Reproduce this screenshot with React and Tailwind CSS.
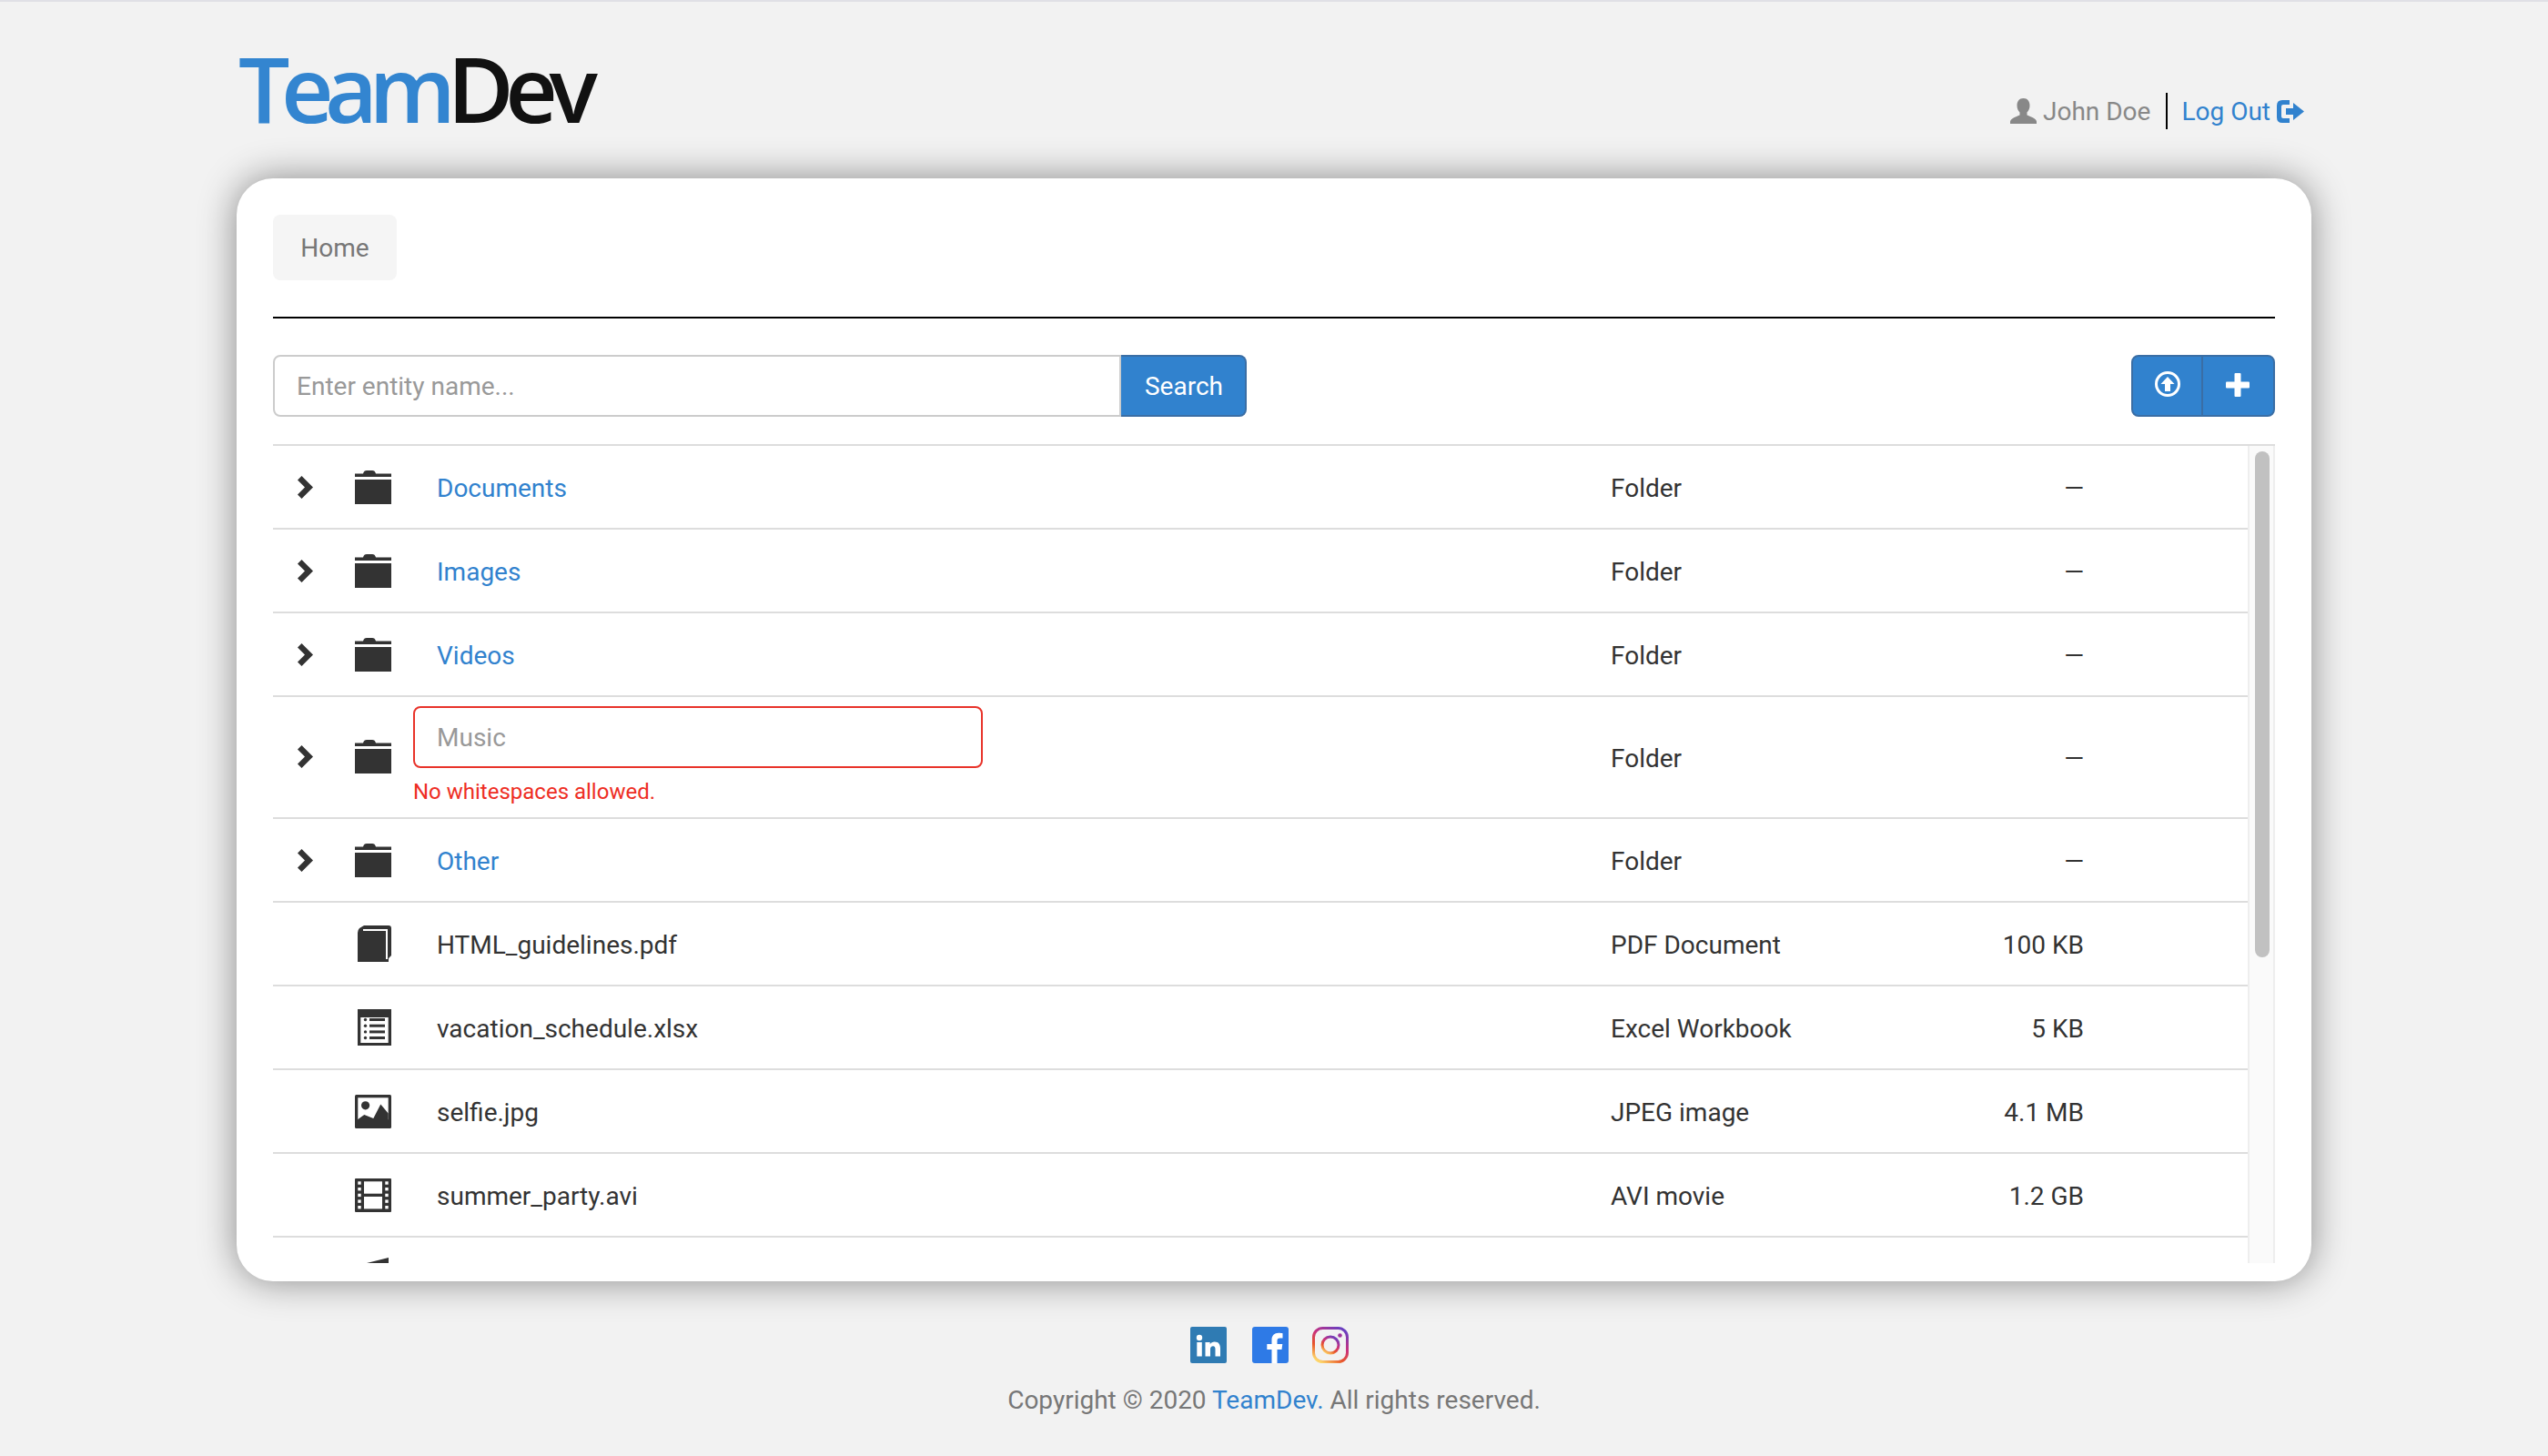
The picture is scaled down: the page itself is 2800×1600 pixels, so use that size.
import React from "react";

const FolderIcon = () => (
  <svg width="40" height="37" viewBox="0 0 40 37" fill="#333">
    <path d="M9 3.6C9.6 1 11 0 13 0h6c2 0 3.4 1 4 3.6h17V7H0V3.6z" />
    <rect y="10" width="40" height="27" />
  </svg>
);

const BookIcon = () => (
  <svg width="37" height="40" viewBox="0 0 37 40">
    <path d="M7 0h27q3 0 3 3v30l-3 3v4H0V8q0-3 2-5z" fill="#333" />
    <path d="M6 5h26v32" fill="none" stroke="#fff" strokeWidth="2" />
  </svg>
);

const ListIcon = () => (
  <svg width="37" height="40" viewBox="0 0 37 40">
    <rect width="37" height="40" fill="#333" />
    <rect x="3.3" y="9" width="30.4" height="28" fill="#fff" />
    <g fill="#333">
      {[10, 16.7, 23.4, 30].map((y) => (
        <g key={y}>
          <circle cx="8.5" cy={y + 1.5} r="1.7" />
          <rect x="13" y={y} width="17" height="3" />
        </g>
      ))}
    </g>
  </svg>
);

const ImageIcon = () => (
  <svg width="40" height="37" viewBox="0 0 40 37">
    <rect width="40" height="37" rx="1.5" fill="#333" />
    <rect x="3.3" y="3.3" width="33.4" height="24" fill="#fff" />
    <circle cx="11.6" cy="11.8" r="4.6" fill="#333" />
    <path d="M3.3 27l7-5 10 4 8-15.5 8.4 10V30H3.3z" fill="#333" />
  </svg>
);

const FilmIcon = () => (
  <svg width="40" height="37" viewBox="0 0 40 37">
    <rect width="40" height="37" rx="1" fill="#333" />
    <rect x="10" y="3.3" width="20" height="13.4" fill="#fff" />
    <rect x="10" y="20" width="20" height="13.4" fill="#fff" />
    {[3.3, 10, 16.7, 23.4, 30].map((y) => (
      <g key={y} fill="#fff">
        <rect x="3.3" y={y} width="3.4" height="3.4" />
        <rect x="33.3" y={y} width="3.4" height="3.4" />
      </g>
    ))}
  </svg>
);

const MusicIcon = () => (
  <svg width="40" height="40" viewBox="0 0 40 40" fill="#333">
    <path d="M13 6L37 0v30a6 5 0 1 1-4-4.7V9L17 13v22a6 5 0 1 1-4-4.7z" />
  </svg>
);

const Chevron = () => (
  <svg width="17" height="25" viewBox="0 0 17 25" fill="#333">
    <path d="M0 4.5L4.5 0 17 12.5 4.5 25 0 20.5 8 12.5z" />
  </svg>
);

const rows = [
  { name: "Documents", type: "Folder", size: "—", icon: <FolderIcon />, folder: true },
  { name: "Images", type: "Folder", size: "—", icon: <FolderIcon />, folder: true },
  { name: "Videos", type: "Folder", size: "—", icon: <FolderIcon />, folder: true },
  { name: "Music", type: "Folder", size: "—", icon: <FolderIcon />, folder: true, editing: true },
  { name: "Other", type: "Folder", size: "—", icon: <FolderIcon />, folder: true },
  { name: "HTML_guidelines.pdf", type: "PDF Document", size: "100 KB", icon: <BookIcon /> },
  { name: "vacation_schedule.xlsx", type: "Excel Workbook", size: "5 KB", icon: <ListIcon /> },
  { name: "selfie.jpg", type: "JPEG image", size: "4.1 MB", icon: <ImageIcon /> },
  { name: "summer_party.avi", type: "AVI movie", size: "1.2 GB", icon: <FilmIcon /> },
];

function Row({ row }) {
  return (
    <div
      className={`grid grid-cols-[154px_1316px_380px_140px_180px] items-center border-b-2 border-[#dddddd] ${
        row.editing ? "h-[134px]" : "h-[92px]"
      }`}
    >
      <div className={`flex items-center pl-[27px] ${row.editing ? "pb-[2px]" : ""}`}>
        <div className="w-[17px] flex">{row.folder && <Chevron />}</div>
        <div className="ml-[46px] w-[40px] flex justify-end">{row.icon}</div>
      </div>
      {row.editing ? (
        <div className="flex flex-col pb-[3px]">
          <input
            readOnly
            placeholder={row.name}
            className="w-[626px] h-[68px] px-[24px] border-2 border-[#e8332a] rounded-lg bg-white text-[28px] placeholder:text-[#999999] outline-none"
          />
          <div className="mt-[11px] text-[24px] leading-[30px] text-[#ee2e24]">No whitespaces allowed.</div>
        </div>
      ) : (
        <div className={`pl-[26px] pt-[4px] ${row.folder ? "text-[#3182ce]" : ""}`}>{row.name}</div>
      )}
      <div className={row.editing ? "pt-[3px]" : "pt-[4px]"}>{row.type}</div>
      <div className={`text-right ${row.editing ? "pt-[3px]" : "pt-[4px]"}`}>{row.size}</div>
      <div />
    </div>
  );
}

export default function App() {
  return (
    <div className="min-h-screen bg-[#f2f2f2] border-t-2 border-[#e0e0e6] font-['Roboto',sans-serif] text-[28px] text-[#333333]">
      <div className="w-[2280px] mx-auto">
        {/* Header */}
        <header className="h-[194px] flex justify-between">
          <div className="pl-[2px] pt-[36px] font-['Open_Sans',sans-serif] text-[100px] leading-[116px] tracking-[-9.5px] font-semibold">
            <span className="text-[#3385d0]">Team</span>
            <span className="text-[#111111]">Dev</span>
          </div>
          <div className="pt-[100px] pr-[8px] flex items-start">
            <div className="flex items-center h-[40px] text-[#888888]">
              <svg width="29" height="28" viewBox="0 0 29 28" fill="#888888">
                <path d="M14.5 0c4.6 0 7 3.4 7 8 0 3-1.2 5.6-3 7.4v3c3 1.6 10.500 3.600 10.500 7.200V28H0v-2.400c0-3.600 7.500-5.600 10.500-7.200v-3c-1.800-1.800-3-4.400-3-7.400 0-4.600 2.400-8 7-8z" />
              </svg>
              <span className="ml-[7px] pt-[1px]">John Doe</span>
            </div>
            <div className="w-[2px] h-[40px] bg-black ml-[17px] mr-[15px]" />
            <div className="flex items-center h-[40px] text-[#3182ce]">
              <span className="pt-[1px]">Log Out</span>
              <svg className="ml-[7px]" width="30" height="25" viewBox="0 0 30 25" fill="#3182ce">
                <path d="M14 0v5H7Q5 5 5 7v11q0 2 2 2h7v5H6q-6 0-6-6V6q0-6 6-6z" />
                <path d="M10 9h8V3l12 9.500L18 22v-6h-8z" />
              </svg>
            </div>
          </div>
        </header>

        {/* Card */}
        <main className="h-[1212px] bg-white rounded-[40px] shadow-[0_0_40px_rgba(0,0,0,0.44)] px-[40px] pt-[40px]">
          <div className="w-[136px] h-[72px] pt-[2px] rounded-lg bg-[#f5f5f5] text-[#777777] flex items-center justify-center">
            Home
          </div>
          <div className="mt-[40px] h-[2px] bg-black" />

          {/* Toolbar */}
          <div className="mt-[40px] flex justify-between h-[68px]">
            <div className="flex">
              <input
                readOnly
                placeholder="Enter entity name..."
                className="w-[932px] px-[24px] pt-[2px] border-2 border-[#cccccc] rounded-l-lg bg-white placeholder:text-[#999999] outline-none"
              />
              <button className="w-[138px] pt-[2px] pl-[2px] bg-[#3182ce] border-2 border-[#3a6ea5] border-l-0 rounded-r-lg text-white">
                Search
              </button>
            </div>
            <div className="flex w-[158px] bg-[#3182ce] border-2 border-[#3a6ea5] rounded-lg">
              <button className="w-[77px] flex items-center justify-center border-r-2 border-[#3a6ea5] pb-[4px]">
                <svg width="28" height="28" viewBox="0 0 28 28">
                  <circle cx="14" cy="14" r="12.500" fill="none" stroke="#fff" strokeWidth="3" />
                  <path d="M14 6l7.500 8H17v8h-6v-8H6.500z" fill="#fff" />
                </svg>
              </button>
              <button className="flex-1 flex items-center justify-center pb-[2px] pr-[2px]">
                <svg width="26" height="26" viewBox="0 0 26 26" fill="#fff">
                  <rect x="9.500" width="7" height="26" rx="1" />
                  <rect y="9.500" width="26" height="7" rx="1" />
                </svg>
              </button>
            </div>
          </div>

          {/* Table */}
          <div className="mt-[30px] h-[900px] border-t-2 border-[#dddddd] flex overflow-hidden">
            <div className="w-[2170px]">
              {rows.map((row) => (
                <Row key={row.name} row={row} />
              ))}
              <div className="pl-[90px] pt-[22px]">
                <MusicIcon />
              </div>
            </div>
            <div className="w-[30px] border-x-2 border-[#eeeeee] bg-[#fafafa] pt-[6px] pl-[6px]">
              <div className="w-[16px] h-[556px] rounded-full bg-[#c1c1c1]" />
            </div>
          </div>
        </main>

        {/* Footer */}
        <footer className="pt-[50px] flex flex-col items-center text-[#777777]">
          <div className="flex items-center mr-[10px]">
            <svg width="40" height="40" viewBox="0 0 40 40">
              <rect width="40" height="40" rx="2" fill="#2f7bb3" />
              <circle cx="10" cy="12" r="3.200" fill="#fff" />
              <rect x="7.300" y="17" width="5.500" height="15.500" fill="#fff" />
              <path d="M16.500 17h5.200v2.200c1-1.600 2.800-2.600 5-2.600 4.400 0 6.300 2.800 6.300 7v8.900h-5.500v-7.900c0-2-.6-3.400-2.500-3.400s-3 1.400-3 3.400v7.900h-5.500z" fill="#fff" />
            </svg>
            <svg className="ml-[28px]" width="40" height="40" viewBox="0 0 40 40">
              <rect width="40" height="40" rx="3" fill="#2e7ae6" />
              <path d="M27.500 40V25h5l.8-6h-5.800v-3.500c0-1.800.6-3 3-3h3V7.200C33 7 31 6.800 29 6.800c-4.600 0-7.500 2.800-7.500 7.900V19h-5.200v6h5.200v15z" fill="#fff" />
            </svg>
            <svg className="ml-[26px]" width="40" height="40" viewBox="0 0 40 40">
              <defs>
                <linearGradient id="insta" x1="0.2" y1="1" x2="0.8" y2="0">
                  <stop offset="0" stopColor="#fdd56a" />
                  <stop offset="0.3" stopColor="#e8562a" />
                  <stop offset="0.6" stopColor="#c9307d" />
                  <stop offset="1" stopColor="#6a3fc0" />
                </linearGradient>
              </defs>
              <rect x="1.500" y="1.500" width="37" height="37" rx="10" fill="none" stroke="url(#insta)" strokeWidth="3" />
              <circle cx="20" cy="20" r="9" fill="none" stroke="url(#insta)" strokeWidth="3" />
              <circle cx="30.500" cy="9.500" r="2.300" fill="#a0359f" />
            </svg>
          </div>
          <div className="mt-[20px]">
            Copyright © 2020 <span className="text-[#3182ce]">TeamDev.</span> All rights reserved.
          </div>
        </footer>
      </div>
    </div>
  );
}
